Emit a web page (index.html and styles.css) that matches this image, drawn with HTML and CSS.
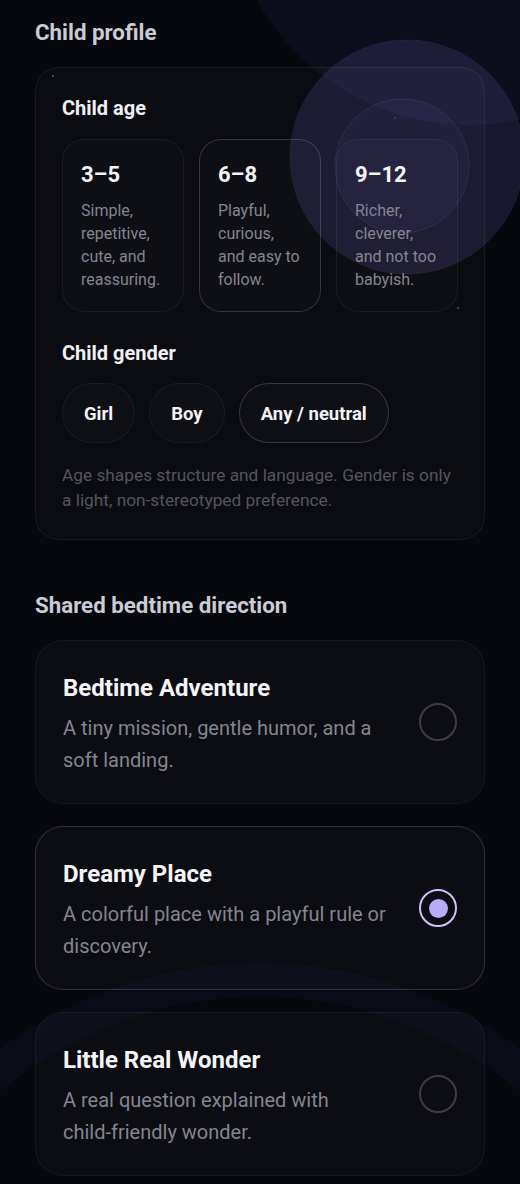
FILE: index.html
```html
<!doctype html>
<html lang="en">
<head>
  <meta charset="UTF-8">
  <title>Child profile</title>
  <link rel="stylesheet" href="styles.css">
</head>
<body>
  <div class="sky">
    <svg width="520" height="1184" viewBox="0 0 520 1184">
      <circle cx="470" cy="-120" r="245" fill="rgba(110,100,210,0.075)"/>
      <circle cx="407" cy="157" r="117" fill="rgba(135,120,235,0.14)" stroke="rgba(255,255,255,0.05)"/>
      <circle cx="402" cy="166" r="67" fill="rgba(135,120,235,0.06)" stroke="rgba(255,255,255,0.07)"/>
      <circle cx="260" cy="1400" r="420" fill="none" stroke="rgba(90,90,200,0.05)" stroke-width="34"/>
      <circle cx="53" cy="76" r="1" fill="rgba(255,255,255,0.35)"/>
      <circle cx="395" cy="118" r="0.8" fill="rgba(255,255,255,0.3)"/>
      <circle cx="458" cy="308" r="1" fill="rgba(255,255,255,0.3)"/>
    </svg>
  </div>

  <main class="page">
    <h2 class="section-title">Child profile</h2>
    <section class="panel">
      <h3 class="label">Child age</h3>
      <div class="ages">
        <div class="age-card">
          <div class="age-range">3–5</div>
          <p>Simple, repetitive, cute, and reassuring.</p>
        </div>
        <div class="age-card on">
          <div class="age-range">6–8</div>
          <p>Playful, curious, and easy to follow.</p>
        </div>
        <div class="age-card">
          <div class="age-range">9–12</div>
          <p>Richer, cleverer, and not too babyish.</p>
        </div>
      </div>

      <h3 class="label">Child gender</h3>
      <div class="chips">
        <span class="chip">Girl</span>
        <span class="chip">Boy</span>
        <span class="chip on">Any / neutral</span>
      </div>
      <p class="note">Age shapes structure and language. Gender is only a light, non-stereotyped preference.</p>
    </section>

    <h2 class="section-title">Shared bedtime direction</h2>
    <div class="options">
      <div class="option">
        <div class="option-text">
          <div class="option-title">Bedtime Adventure</div>
          <p>A tiny mission, gentle humor, and a soft landing.</p>
        </div>
        <span class="radio"></span>
      </div>
      <div class="option on">
        <div class="option-text">
          <div class="option-title">Dreamy Place</div>
          <p>A colorful place with a playful rule or discovery.</p>
        </div>
        <span class="radio"></span>
      </div>
      <div class="option">
        <div class="option-text">
          <div class="option-title">Little Real Wonder</div>
          <p>A real question explained with <span class="nobr">child-friendly</span> wonder.</p>
        </div>
        <span class="radio"></span>
      </div>
    </div>
  </main>
</body>
</html>
```

FILE: styles.css
```css
* { margin: 0; padding: 0; box-sizing: border-box; }
html, body { background: #07070e; }
body {
  width: 520px;
  height: 1184px;
  overflow: hidden;
  position: relative;
  font-family: Roboto, "Liberation Sans", sans-serif;
  color: #f2f2f5;
}

/* decorative background */
.sky { position: absolute; top: 0; left: 0; z-index: 0; pointer-events: none; }
.sky svg { display: block; }

.page {
  position: relative;
  z-index: 1;
  padding: 19px 35px 0;
  display: flex;
  flex-direction: column;
}

.section-title {
  font-size: 22.3px;
  line-height: 26px;
  font-weight: 700;
  color: #cbcbd3;
  margin-bottom: 22px;
}

.panel {
  border: 1px solid rgba(255,255,255,0.06);
  background: rgba(255,255,255,0.02);
  border-radius: 24px;
  padding: 27px 26px 26px;
  margin-bottom: 52px;
}
.label {
  font-size: 20px;
  line-height: 26px;
  font-weight: 700;
  color: #f0f0f3;
}

.ages {
  display: grid;
  grid-template-columns: repeat(3, 122px);
  gap: 15px;
  margin: 18px 0 28px;
}
.age-card {
  border: 1px solid rgba(255,255,255,0.06);
  background: rgba(255,255,255,0.015);
  border-radius: 22px;
  padding: 21px 18px 20px;
}
.age-card.on { border-color: rgba(255,255,255,0.16); }
.age-range {
  font-size: 22px;
  line-height: 28px;
  font-weight: 700;
  color: #f4f4f6;
  margin-bottom: 10px;
}
.age-card p {
  font-size: 16px;
  line-height: 23px;
  color: #85858e;
}

.chips { display: flex; gap: 14px; margin: 17px 0 20px; }
.chip {
  height: 60px;
  padding: 2px 21px 0;
  display: flex;
  align-items: center;
  border: 1px solid rgba(255,255,255,0.05);
  background: rgba(255,255,255,0.02);
  border-radius: 30px;
  font-size: 18.5px;
  font-weight: 700;
  color: #f2f2f5;
}
.chip.on { border-color: rgba(255,255,255,0.16); }

.note {
  font-size: 17.3px;
  line-height: 25px;
  color: #55555e;
}

.options { display: flex; flex-direction: column; gap: 22px; }
.option {
  height: 164px;
  border: 1px solid rgba(255,255,255,0.05);
  background: rgba(255,255,255,0.022);
  border-radius: 28px;
  padding: 0 27px;
  display: flex;
  align-items: center;
  gap: 24px;
}
.option.on { border-color: rgba(255,255,255,0.15); }
.option-text { flex: 1; padding-top: 4px; }
.option-title {
  font-size: 24px;
  line-height: 30px;
  font-weight: 700;
  color: #f4f4f6;
  margin-bottom: 9px;
}
.option-text p {
  font-size: 20px;
  line-height: 32px;
  color: #85858e;
}
.nobr { white-space: nowrap; }
.radio {
  flex: none;
  width: 38px;
  height: 38px;
  border-radius: 50%;
  border: 2px solid rgba(255,255,255,0.2);
  display: flex;
  align-items: center;
  justify-content: center;
}
.option.on .radio { border-color: #cbc3f5; }
.option.on .radio::after {
  content: "";
  width: 19px;
  height: 19px;
  border-radius: 50%;
  background: #b9acf7;
}
```
